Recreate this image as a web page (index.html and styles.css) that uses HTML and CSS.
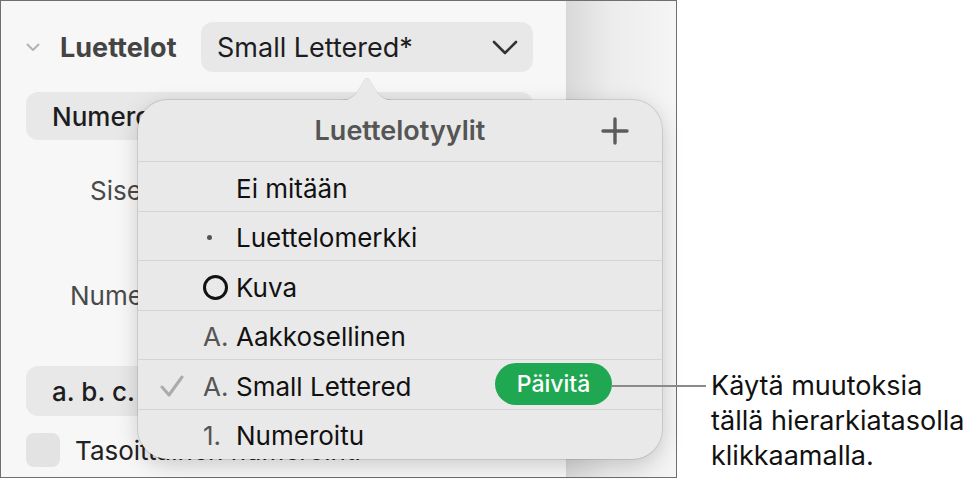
FILE: index.html
```html
<!DOCTYPE html>
<html lang="fi">
<head>
    <meta charset="UTF-8">
    <meta name="viewport" content="width=device-width, initial-scale=1.0">
    <title>Luettelotyylit</title>
    <link rel="stylesheet" href="styles.css">
</head>
<body>
    <div class="page">
        <div class="window">
            <aside class="sidebar">
                <div class="section-head">
                    <svg class="disclosure" width="14" height="9" viewBox="0 0 14 9"><path d="M1.5 1.5 L7 7 L12.5 1.5"/></svg>
                    <span class="section-title">Luettelot</span>
                    <button class="select select-style">
                        <span>Small Lettered*</span>
                        <svg class="select-chevron" width="26" height="15" viewBox="0 0 26 15"><path d="M2 2 L13 13 L24 2"/></svg>
                    </button>
                </div>
                <button class="select select-kind">Numeroitu</button>
                <div class="field field-indent">Sisennykset</div>
                <div class="field field-number">Numerointi</div>
                <button class="select select-format">a. b. c.</button>
                <label class="check-row"><span class="checkbox"></span>Tasoittainen numerointi</label>
            </aside>
            <div class="canvas"></div>

            <!-- list style popover -->
            <div class="popover">
                <svg class="popover-arrow" width="64" height="25" viewBox="0 0 64 25"><path d="M0 25 C13 25 17 23 23 15 L29 5 Q32 0.5 35 5 L41 15 C47 23 51 25 64 25 Z"/></svg>
                <div class="popover-head">
                    <span class="popover-title">Luettelotyylit</span>
                    <svg class="add" width="28" height="28" viewBox="0 0 28 28"><path d="M14 2 V26 M2 14 H26"/></svg>
                </div>
                <ul class="style-list">
                    <li><span class="tick"></span><span class="marker"></span><span class="name">Ei mitään</span></li>
                    <li><span class="tick"></span><span class="marker"><i class="dot"></i></span><span class="name">Luettelomerkki</span></li>
                    <li><span class="tick"></span><span class="marker"><i class="ring"></i></span><span class="name">Kuva</span></li>
                    <li><span class="tick"></span><span class="marker">A.</span><span class="name">Aakkosellinen</span></li>
                    <li>
                        <span class="tick"><svg width="24" height="22" viewBox="0 0 24 22"><path d="M2 12 L9 20 L22 2"/></svg></span>
                        <span class="marker">A.</span><span class="name">Small Lettered</span>
                        <button class="update">Päivitä</button>
                    </li>
                    <li><span class="tick"></span><span class="marker">1.</span><span class="name">Numeroitu</span></li>
                </ul>
            </div>
            <span class="callout-line"></span>
        </div>
        <p class="note">Käytä muutoksia<br>tällä hierarkiatasolla<br>klikkaamalla.</p>
    </div>
</body>
</html>
```

FILE: styles.css
```css
body {
    margin: 0;
    background: #fff;
    font-family: "Inter", "Liberation Sans", sans-serif;
    color: #1d1d1f;
}
.page {
    display: flex;
    height: 479px;
    overflow: hidden;
}
.window {
    position: relative;
    display: flex;
    flex: none;
    width: 677px;
    height: 478px;
    box-sizing: border-box;
    border: 1.5px solid #6f6f6f;
}

/* inspector sidebar */
.sidebar {
    width: 566px;
    box-sizing: border-box;
    padding: 21px 33px 0 25px;
    background: #f7f7f7;
    border-right: 1px solid #d6d6d6;
}
.section-head {
    display: flex;
    align-items: center;
    height: 50px;
}
.disclosure {
    fill: none;
    stroke: #b4b4b4;
    stroke-width: 2;
    stroke-linecap: round;
    stroke-linejoin: round;
}
.section-title {
    margin-left: 20px;
    font-size: 27px;
    font-weight: 700;
    color: #444;
}
.select {
    display: flex;
    align-items: center;
    width: 100%;
    height: 48px;
    box-sizing: border-box;
    padding: 0 26px;
    border: none;
    border-radius: 12px;
    background: #e8e8e8;
    font-family: inherit;
    font-size: 26px;
    font-weight: 500;
    color: #1d1d1f;
    text-align: left;
}
.select-style {
    width: 332px;
    height: 50px;
    margin-left: auto;
    padding: 0 15px 0 16px;
    justify-content: space-between;
    font-size: 27px;
    font-weight: 400;
}
.select-chevron {
    fill: none;
    stroke: #333;
    stroke-width: 2.6;
    stroke-linecap: round;
    stroke-linejoin: round;
}
.select-kind {
    margin-top: 20px;
}
.field {
    font-size: 26px;
    line-height: 29px;
    color: #4a4a4a;
}
.field-indent {
    margin: 36px 0 0 64px;
}
.field-number {
    margin: 76px 0 0 44px;
}
.select-format {
    margin-top: 56px;
    height: 50px;
}
.check-row {
    display: flex;
    align-items: center;
    gap: 15px;
    margin-top: 17px;
    font-size: 26px;
    line-height: 29px;
    color: #222;
}
.checkbox {
    width: 34px;
    height: 34px;
    border-radius: 8px;
    background: #e3e3e3;
}

/* document canvas edge */
.canvas {
    flex: 1;
    background: linear-gradient(to right, #d9d9d9, #ececec 40%, #f5f5f5);
}

/* popover */
.popover {
    position: absolute;
    left: 137px;
    top: 99px;
    width: 524px;
    height: 359px;
    box-sizing: border-box;
    border-radius: 30px;
    background: #e9e9e9;
    box-shadow: 0 0 0 1px rgba(0, 0, 0, 0.1), 0 6px 22px rgba(0, 0, 0, 0.18);
}
.popover-arrow {
    position: absolute;
    left: 197px;
    top: -24px;
    fill: #e9e9e9;
    filter: drop-shadow(0 -1px 0 rgba(0, 0, 0, 0.1));
}
.popover-head {
    position: relative;
    height: 61px;
    display: flex;
    align-items: center;
    justify-content: center;
}
.popover-title {
    font-size: 27px;
    font-weight: 600;
    color: #555;
}
.add {
    position: absolute;
    right: 33px;
    top: 17px;
    fill: none;
    stroke: #5c5c5c;
    stroke-width: 3.4;
    stroke-linecap: round;
}
.style-list {
    margin: 0;
    padding: 0;
    list-style: none;
}
.style-list li {
    display: grid;
    grid-template-columns: 43px 33px 1fr auto;
    align-items: center;
    height: 49.5px;
    box-sizing: border-box;
    padding: 4px 50px 0 22px;
    border-top: 1.5px solid #d4d4d4;
    font-size: 26px;
}
.tick svg {
    display: block;
    fill: none;
    stroke: #ababab;
    stroke-width: 3;
    stroke-linecap: round;
    stroke-linejoin: round;
}
.marker {
    color: #555;
}
.dot {
    display: block;
    width: 5px;
    height: 5px;
    margin-left: 4px;
    border-radius: 50%;
    background: #555;
}
.ring {
    display: block;
    width: 19px;
    height: 19px;
    border: 3.5px solid #111;
    border-radius: 50%;
}
.name {
    color: #111;
}
.update {
    width: 117px;
    height: 42px;
    margin-top: -4px;
    border: none;
    border-radius: 21px;
    background: #1fa751;
    font-family: inherit;
    font-size: 23px;
    font-weight: 500;
    color: #fff;
}

.callout-line {
    position: absolute;
    left: 611px;
    top: 383.5px;
    width: 94px;
    height: 2px;
    background: #8a8a8a;
}

.note {
    align-self: flex-end;
    margin: 0 0 6px 34px;
    font-size: 27px;
    line-height: 35px;
    white-space: nowrap;
    color: #111;
}
```
